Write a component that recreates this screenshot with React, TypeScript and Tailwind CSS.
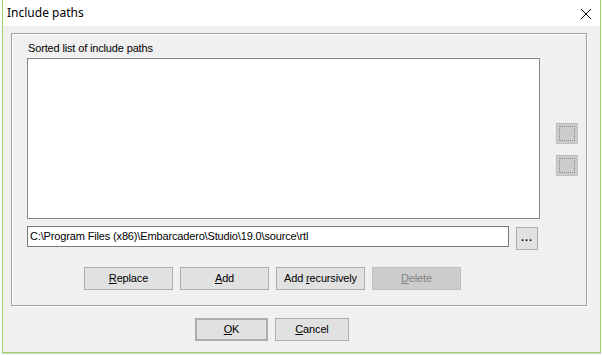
import React from "react"

const ui = { fontFamily: '"Liberation Sans", Arial, sans-serif' }

function Btn({ children, className = "", disabled = false }: { children: React.ReactNode; className?: string; disabled?: boolean }) {
  return (
    <div
      className={
        "flex items-center justify-center h-[23px] text-[11px] tracking-[-0.15px] " +
        (disabled
          ? "bg-[#cccccc] border border-[#bfbfbf] text-[#838383] "
          : "bg-[#e1e1e1] border border-[#adadad] text-black ") +
        className
      }
    >
      {children}
    </div>
  )
}

function SideBtn() {
  return (
    <div className="w-[22px] h-[21px] bg-[#cccccc] border border-[#bfbfbf] p-[2px]">
      <div className="w-full h-full border border-dotted border-[#8a8a8a]" />
    </div>
  )
}

export default function App() {
  return (
    <div className="w-[602px] h-[355px] bg-[#fdfdfd] overflow-hidden" style={ui}>
      <div className="ml-[2px] w-[599px] h-[353px] border-x border-b border-[#9fd162] bg-[#f0f0f0] flex flex-col shadow-[0_1px_0_#d0d0d0]">
        {/* title bar */}
        <div className="h-[26px] bg-white flex items-center justify-between pl-[4px] pr-[8px]">
          <span className="text-[12px] text-black" style={{ fontFamily: '"Noto Sans", "Open Sans", sans-serif' }}>
            Include paths
          </span>
          <svg width="12" height="12" viewBox="0 0 12 12" className="mt-[1px]">
            <path d="M1 1L11 11M11 1L1 11" stroke="#000" strokeWidth="1" />
          </svg>
        </div>

        {/* group box */}
        <div className="mt-[7px] ml-[8px] w-[576px] h-[273px] border border-[#a0a0a0] shadow-[inset_1px_1px_0_#fff,1px_1px_0_#fff] pl-[15px] pt-[8px]">
          <div className="text-[11px] tracking-[-0.15px] text-black leading-[13px] ml-[1px]">Sorted list of include paths</div>
          <div className="flex mt-[3px]">
            <div className="w-[513px] h-[161px] bg-white border border-[#828790]" />
            <div className="flex flex-col gap-[11px] ml-[16px] mt-[65px]">
              <SideBtn />
              <SideBtn />
            </div>
          </div>
          <div className="flex items-start mt-[7px]">
            <div className="w-[482px] h-[21px] bg-white border border-[#7a7a7a] flex items-center pl-[2px] text-[11px] tracking-[-0.15px] text-black">
              C:\Program Files (x86)\Embarcadero\Studio\19.0\source\rtl
            </div>
            <Btn className="w-[22px] h-[20px] ml-[7px] mt-[1px] font-bold tracking-[1px] leading-none pb-[2px]">...</Btn>
          </div>
          <div className="flex gap-[7px] mt-[17px] ml-[57px]">
            <Btn className="w-[89px]"><span><u>R</u>eplace</span></Btn>
            <Btn className="w-[89px]"><span><u>A</u>dd</span></Btn>
            <Btn className="w-[89px]"><span>Add <u>r</u>ecursively</span></Btn>
            <Btn className="w-[89px]" disabled><span><u>D</u>elete</span></Btn>
          </div>
        </div>

        {/* dialog buttons */}
        <div className="flex gap-[7px] mt-[12px] ml-[192px]">
          <Btn className="w-[73px] border-2 border-[#0078d7]"><span><u>O</u>K</span></Btn>
          <Btn className="w-[74px]"><span><u>C</u>ancel</span></Btn>
        </div>
      </div>
    </div>
  )
}
